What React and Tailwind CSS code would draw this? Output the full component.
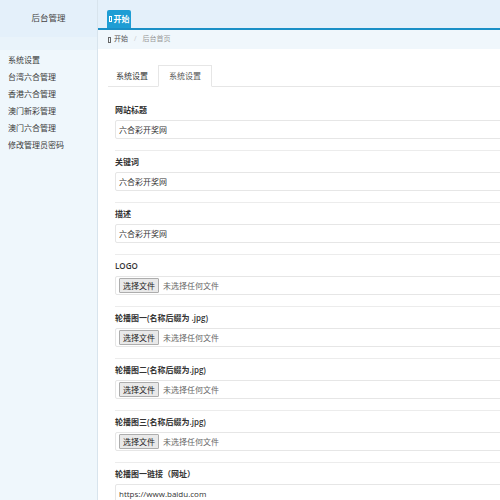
import React from "react";

const font = { fontFamily: '"Open Sans", "Noto Sans CJK SC", sans-serif' };

function TextField({ label, value }) {
  return (
    <div className="shrink-0 pt-[5px] pb-[11px] border-b border-[#ececec]">
      <div className="h-[12px] leading-[12px] text-[8px] font-semibold text-[#333]">{label}</div>
      <div className="mt-[4px] h-[19px] border border-[#e6e6e6] rounded-[2px] pl-[3px] flex items-center text-[8px] text-[#333] w-[400px]">
        {value}
      </div>
    </div>
  );
}

function FileField({ label }) {
  return (
    <div className="shrink-0 pt-[5px] pb-[11px] border-b border-[#ececec]">
      <div className="h-[12px] leading-[12px] text-[8px] font-semibold text-[#333]">{label}</div>
      <div className="mt-[4px] h-[19px] border border-[#e6e6e6] rounded-[2px] pl-[3px] flex items-center text-[8px] text-[#555] w-[400px]">
        <span className="h-[15px] px-[3px] flex items-center bg-[#e9e9e9] border border-[#adadad] rounded-[1px] text-[#222]">选择文件</span>
        <span className="ml-[4px] text-[#666]">未选择任何文件</span>
      </div>
    </div>
  );
}

export default function App() {
  return (
    <div className="w-[500px] h-[500px] overflow-hidden flex bg-white" style={font}>
      <div className="w-[98px] shrink-0 flex flex-col border-r border-[#d8e4ed] bg-[#eff7fc]">
        <div className="shrink-0 h-[37px] bg-[#e4f0fa] flex items-center justify-center text-[8.5px] text-[#444]">后台管理</div>
        <div className="shrink-0 h-[13px] bg-[#e9f3fa]"></div>
        <div className="shrink-0 pt-[1px] pl-[8px] text-[8px] text-[#3a3a3a]">
          {["系统设置", "台湾六合管理", "香港六合管理", "澳门新彩管理", "澳门六合管理", "修改管理员密码"].map((t) => (
            <div key={t} className="h-[17px] leading-[17px]">{t}</div>
          ))}
        </div>
      </div>
      <div className="flex-1 flex flex-col min-w-0 overflow-hidden">
        <div className="shrink-0 h-[28px] bg-[#e4f0fa] flex items-end pl-[9px]">
          <div className="h-[18px] w-[24px] bg-[#1e9dd4] rounded-t-[2px] flex items-center justify-center gap-[2px] text-white text-[8px] font-bold">
            <span className="inline-block w-[3px] h-[6px] border border-white"></span>
            <span>开始</span>
          </div>
        </div>
        <div className="shrink-0 h-[2px] bg-[#1a8fc6]"></div>
        <div className="shrink-0 h-[19px] bg-[#f0f7fc] flex items-center pl-[10px] text-[7px]">
          <span className="inline-block w-[3px] h-[6px] border border-[#666] mr-[3px]"></span>
          <span className="text-[#555]">开始</span>
          <span className="mx-[6px] text-[#ccc]">/</span>
          <span className="text-[#999]">后台首页</span>
        </div>
        <div className="shrink-0 pl-[10px]">
          <div className="mt-[16px] h-[22px] flex border-b border-[#e6e6e6]">
            <div className="w-[50px] pl-[8px] flex items-center text-[8px] text-[#333]">系统设置</div>
            <div className="w-[54px] bg-white border border-[#e6e6e6] border-b-white -mb-[1px] flex items-center justify-center text-[8px] text-[#555]">系统设置</div>
          </div>
          <div className="pl-[7px] pt-[12px]">
            <TextField label="网站标题" value="六合彩开奖网" />
            <TextField label="关键词" value="六合彩开奖网" />
            <TextField label="描述" value="六合彩开奖网" />
            <FileField label="LOGO" />
            <FileField label="轮播图一(名称后缀为 .jpg)" />
            <FileField label="轮播图二(名称后缀为.jpg)" />
            <FileField label="轮播图三(名称后缀为.jpg)" />
            <TextField label="轮播图一链接（网址）" value="https://www.baidu.com" />
          </div>
        </div>
      </div>
    </div>
  );
}
